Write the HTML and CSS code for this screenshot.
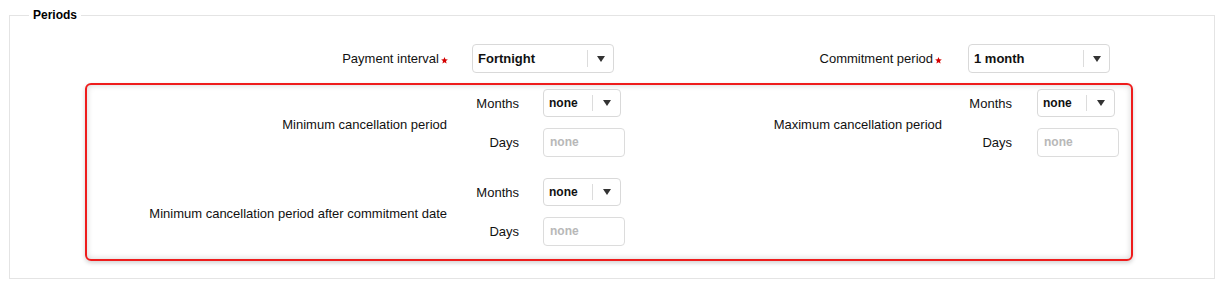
FILE: index.html
```html
<!DOCTYPE html>
<html lang="en">
<head>
  <meta charset="UTF-8" />
  <title>Periods</title>
  <link rel="stylesheet" href="styles.css">
</head>
<body>

  <fieldset class="periods">
    <legend>Periods</legend>

    <div class="top-row">
      <label class="field-label first">Payment interval<svg class="star" viewBox="0 0 10 10"><polygon points="5,0 6.3,3.2 9.8,3.5 7.1,5.8 8,9.4 5,7.4 2,9.4 2.9,5.8 0.2,3.5 3.7,3.2"/></svg></label>
      <div class="dropdown wide"><span class="value">Fortnight</span><span class="caret"></span></div>

      <label class="field-label second">Commitment period<svg class="star" viewBox="0 0 10 10"><polygon points="5,0 6.3,3.2 9.8,3.5 7.1,5.8 8,9.4 5,7.4 2,9.4 2.9,5.8 0.2,3.5 3.7,3.2"/></svg></label>
      <div class="dropdown wide"><span class="value">1 month</span><span class="caret"></span></div>
    </div>

    <div class="highlight">
      <div class="range-row">
        <div class="range-group">
          <div class="range-label">Minimum cancellation period</div>
          <div class="sub-label">Months</div>
          <div class="ctrl"><div class="dropdown small"><span class="value">none</span><span class="caret"></span></div></div>
          <div class="sub-label">Days</div>
          <div class="ctrl"><input class="days" type="text" placeholder="none"></div>
        </div>
        <div class="range-group right">
          <div class="range-label">Maximum cancellation period</div>
          <div class="sub-label">Months</div>
          <div class="ctrl"><div class="dropdown small"><span class="value">none</span><span class="caret"></span></div></div>
          <div class="sub-label">Days</div>
          <div class="ctrl"><input class="days" type="text" placeholder="none"></div>
        </div>
      </div>

      <div class="range-row">
        <div class="range-group">
          <div class="range-label">Minimum cancellation period after commitment date</div>
          <div class="sub-label">Months</div>
          <div class="ctrl"><div class="dropdown small"><span class="value">none</span><span class="caret"></span></div></div>
          <div class="sub-label">Days</div>
          <div class="ctrl"><input class="days" type="text" placeholder="none"></div>
        </div>
      </div>
    </div>
  </fieldset>

</body>
</html>
```

FILE: styles.css
```css
body {
  margin: 0;
  padding: 8px 0 0;
  font-family: "Liberation Sans", Arial, sans-serif;
  font-size: 13px;
  color: #111;
  background: #fff;
}

.periods {
  margin: 0 9px;
  padding: 21px 0 17px;
  border: 1px solid #e4e4e4;
  min-width: 0;
}

.periods legend {
  margin-left: 19px;
  padding: 0 4px;
  font-size: 12px;
  font-weight: bold;
  color: #000;
  line-height: 15px;
}

.top-row {
  display: flex;
  align-items: center;
}

.field-label {
  text-align: right;
  box-sizing: border-box;
}

.field-label.first {
  width: 438px;
}

.field-label.second {
  width: 330px;
  padding-right: 2px;
}

.star {
  width: 7px;
  height: 7px;
  margin-left: 2px;
  vertical-align: -1px;
  fill: #d40000;
}

.dropdown {
  display: flex;
  align-items: stretch;
  box-sizing: border-box;
  height: 29px;
  border: 1px solid #d9d9d9;
  border-radius: 4px;
  background: #fff;
}

.dropdown .value {
  flex: 1;
  display: flex;
  align-items: center;
  padding-left: 5px;
  font-weight: bold;
  color: #111;
}

.dropdown .caret {
  position: relative;
  width: 25px;
  margin: 5px 0;
  border-left: 1px solid #dcdcdc;
}

.dropdown .caret::after {
  content: "";
  position: absolute;
  left: 50%;
  top: 50%;
  margin: -3px 0 0 -4px;
  border-left: 4.5px solid transparent;
  border-right: 4.5px solid transparent;
  border-top: 6px solid #333;
}

.dropdown.wide {
  width: 142px;
  margin-left: 24px;
}

.dropdown.small {
  width: 78px;
  height: 28px;
}

.dropdown.small .value {
  font-size: 12px;
}

.dropdown.small .caret {
  width: 27px;
}

.highlight {
  margin: 10px 81px 0 75px;
  padding: 4px 0 14px;
  border: 2px solid #ee1c1c;
  border-radius: 6px;
  box-shadow: inset 0 0 6px rgba(0, 0, 0, 0.18), 0 2px 4px rgba(0, 0, 0, 0.18);
}

.range-row {
  display: flex;
}

.range-row + .range-row {
  margin-top: 22px;
}

.range-group {
  display: grid;
  grid-template-columns: 360px 72px 106px;
  grid-template-rows: 28px 28px;
  row-gap: 11px;
  align-items: center;
}

.range-group.right {
  grid-template-columns: 317px 70px 107px;
}

.range-label {
  grid-row: 1 / 3;
  text-align: right;
  padding-top: 3px;
}

.sub-label {
  text-align: right;
}

.ctrl {
  padding-left: 24px;
}

.range-group.right .ctrl {
  padding-left: 25px;
}

.days {
  box-sizing: border-box;
  width: 82px;
  height: 29px;
  padding: 0 6px;
  border: 1px solid #dcdcdc;
  border-radius: 4px;
  font-family: "Liberation Sans", Arial, sans-serif;
  font-size: 12px;
  font-weight: bold;
}

.days::placeholder {
  color: #b8b8b8;
}
```
